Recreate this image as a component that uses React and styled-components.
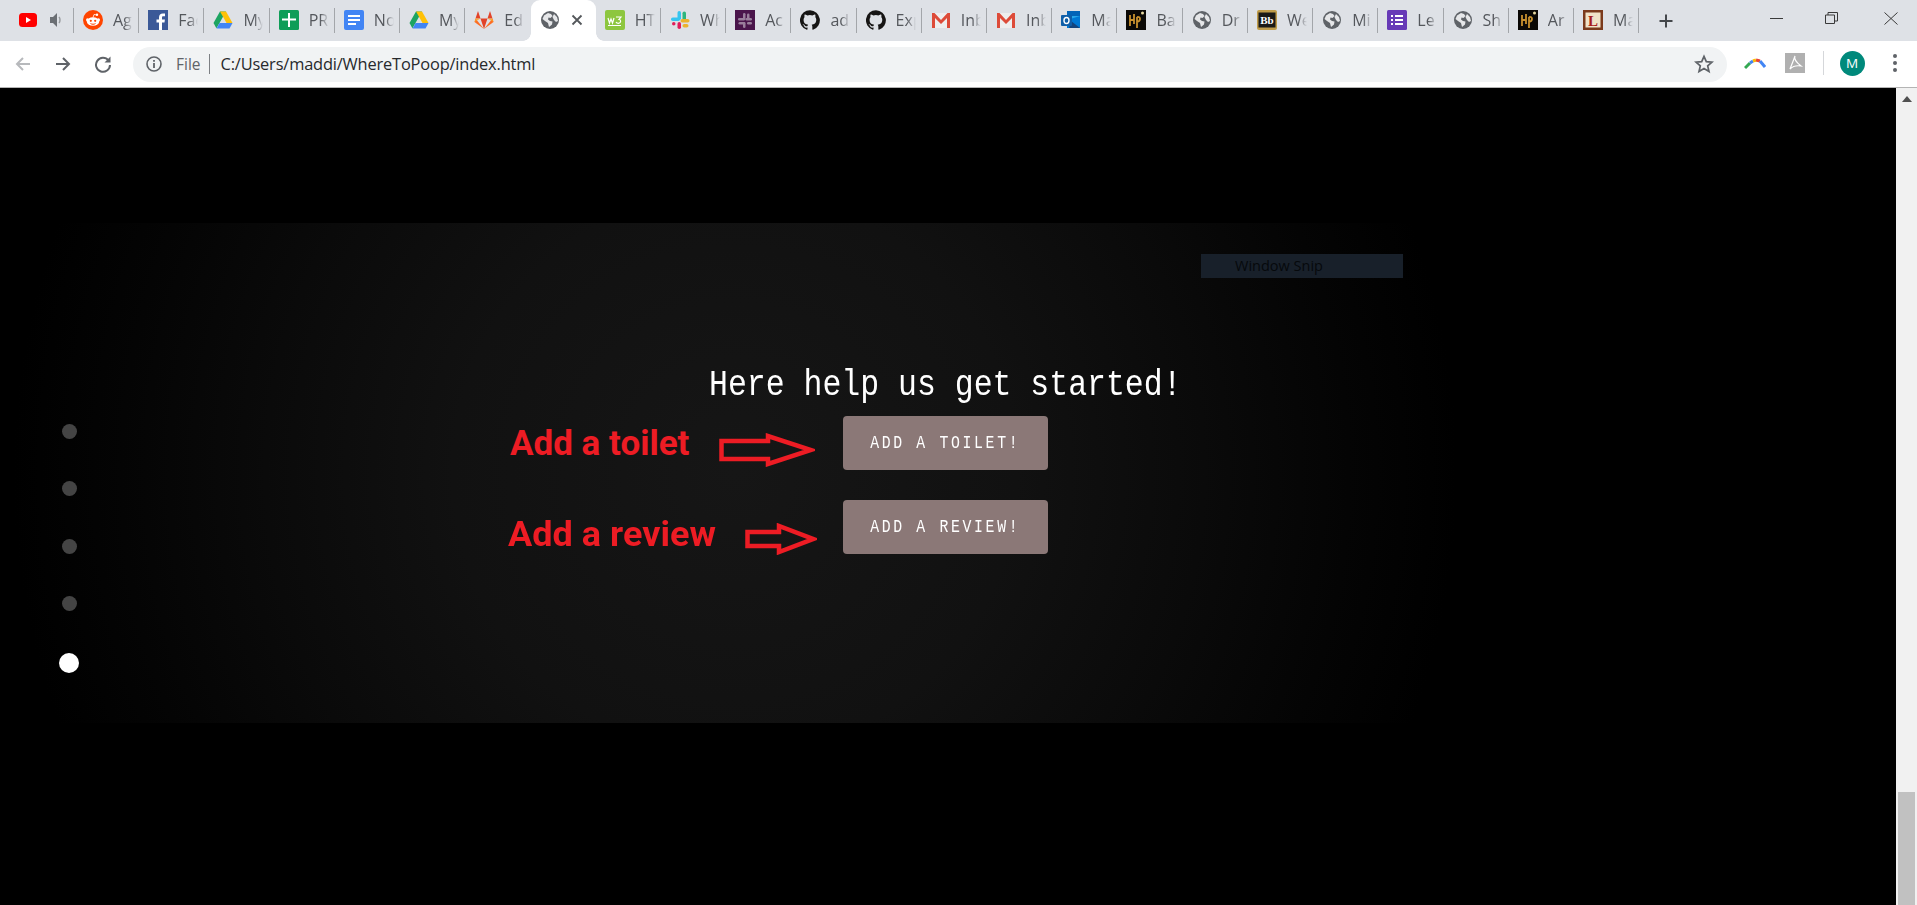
import React from "react";
import styled, { createGlobalStyle } from "styled-components";

const Global = createGlobalStyle`
  html, body { margin: 0; padding: 0; height: 100%; overflow: hidden; background: #000; }
  #root { height: 100%; }
`;

const Page = styled.div`
  width: 1917px; height: 905px; display: flex; flex-direction: column; overflow: hidden;
  font-family: "Open Sans", "Liberation Sans", sans-serif;
`;
const TabStrip = styled.div`
  height: 41px; flex: none; background: #dee1e6; display: flex; align-items: stretch; padding-left: 8.77px;
`;
const Tab = styled.div`
  position: relative; width: 65.23px; flex: none; box-sizing: border-box; display: flex; align-items: center;
  padding: 0 0 1px ${p => p.$first ? 9.5 : 9}px;
  background: ${p => p.$active ? "#fff" : "transparent"};
  border-radius: ${p => p.$active ? "9px 9px 0 0" : "0"};
  &::before {
    content: ""; position: absolute; left: -8px; right: -8px; bottom: 0; height: 8px;
    display: ${p => p.$active ? "block" : "none"};
    background:
      radial-gradient(circle at 0 0, transparent 7.5px, #fff 8px) left center / 8px 8px no-repeat,
      radial-gradient(circle at 100% 0, transparent 7.5px, #fff 8px) right center / 8px 8px no-repeat;
  }
  &::after {
    content: ""; position: absolute; right: 0; top: 8px; height: 25px; width: 1px;
    background: ${p => p.$sep ? "#a3a6aa" : "transparent"};
  }
`;
const Favicon = styled.span`
  width: 20px; height: 20px; flex: none; display: block;
  svg { display: block; width: 20px; height: 20px; }
`;
const TabLabel = styled.span`
  margin-left: 10px; width: 20px; overflow: hidden; white-space: nowrap; font-size: 16px; line-height: 20px; color: #54575c;
  -webkit-mask-image: linear-gradient(90deg, #000 55%, transparent 100%);
  mask-image: linear-gradient(90deg, #000 55%, transparent 100%);
`;
const SpeakerSlot = styled.span`
  margin-left: 12px; width: 13px; height: 16px; display: block;
  svg { display: block; }
`;
const CloseSlot = styled.span`
  margin-left: 11px; width: 12px; height: 12px; display: block;
  svg { display: block; }
`;
const NewTab = styled.div`
  width: 24px; margin-left: 15px; flex: none; display: flex; align-items: center; justify-content: center;
`;
const WindowControls = styled.div`
  margin-left: auto; margin-right: -3px; display: flex; align-items: flex-start;
`;
const WindowButton = styled.div`
  width: 57.5px; height: 30px; box-sizing: border-box; display: flex; align-items: center; justify-content: center; padding: 6px ${p => p.$nudge || 0}px 0 0;
`;
const Toolbar = styled.div`
  height: 46px; flex: none; box-sizing: content-box; background: #fff; border-bottom: 1px solid #b4b4b4; display: flex; align-items: center; padding-left: 13px; padding-bottom: 0;
`;
const NavButton = styled.div`
  width: 20px; height: 20px; margin-right: ${p => p.$gap}px; margin-top: -1px; display: flex; align-items: center; justify-content: center; flex: none;
`;
const Omnibox = styled.div`
  width: 1594px; height: 35px; margin-left: 10.5px; border-radius: 18px; background: #f1f3f4; display: flex; align-items: center; flex: none; padding-left: 13.5px; box-sizing: border-box;
`;
const FileChip = styled.span`
  font-size: 15.5px; color: #5f6368; margin-left: 14px; line-height: 20px;
`;
const OmniDivider = styled.span`
  width: 1px; height: 20px; background: #7d8084; margin-left: 8px; margin-right: 11px;
`;
const Url = styled.span`
  font-size: 16.4px; color: #27292c; letter-spacing: -0.17px; line-height: 20px;
`;
const Star = styled.span`
  margin-left: auto; margin-right: 13px; display: flex;
`;
const ToolIcons = styled.div`
  display: flex; align-items: center; flex: 1; padding: 0 0 2px 17px;
`;
const ToolDivider = styled.span`
  width: 1px; height: 24px; background: #d5d7da; margin: 0 16px 0 18px;
`;
const Avatar = styled.span`
  width: 25px; height: 25px; border-radius: 50%; background: #00897b; color: #fff; font-size: 13.5px; display: flex; align-items: center; justify-content: center; flex: none;
`;
const MenuDots = styled.span`
  display: flex; flex-direction: column; gap: 3px; margin-left: 28px;
  i { display: block; width: 4px; height: 4px; border-radius: 50%; background: #5f6368; }
`;
const Viewport = styled.div`
  flex: 1; display: flex; min-height: 0; background: #000;
`;
const Content = styled.main`
  position: relative; flex: 1; min-width: 0; padding-top: 135px;
`;
const Panel = styled.section`
  height: 500px; display: flex; flex-direction: column; align-items: flex-start; position: relative; box-sizing: border-box; padding: 139px 0 0 508px;
  background: radial-gradient(circle 722px at 735px 250px, #161616 0%, #111111 39%, #0a0a0a 65%, #040404 85%, #000 100%);
`;
const SnipLabel = styled.div`
  position: absolute; left: 1201px; top: 31px; width: 202px; height: 24px; box-sizing: border-box; padding-left: 34px; background: #18202a; color: #06090c; font-size: 14.5px; line-height: 24px;
`;
const Heading = styled.h1`
  margin: 0 0 0 201px; font-family: "Liberation Mono", monospace; font-weight: 400; font-size: 36px; line-height: 48px; color: #fff; white-space: nowrap;
  transform: scaleX(0.875); transform-origin: left center;
`;
const ActionRow = styled.div`
  display: flex; align-items: center; height: 54px; margin-top: ${p => p.$top}px;
`;
const Note = styled.span`
  width: ${p => p.$w}px; flex: none; color: #ed1c24; font-family: Roboto, sans-serif; font-weight: 700; font-size: 35px; line-height: 40px; white-space: nowrap; margin-left: ${p => p.$left}px; margin-top: ${p => p.$dy}px;
  transform: scaleX(${p => p.$sx}); transform-origin: left center;
`;
const Arrow = styled.svg`
  flex: none; display: block; margin-top: ${p => p.$dy}px;
`;
const ActionButton = styled.button`
  width: 205px; height: 54px; margin-left: ${p => p.$left}px; flex: none; border: 0; border-radius: 4px; background: #8b7877; color: #fff; padding: 0; display: flex; align-items: center; justify-content: center; overflow: hidden;
`;
const ButtonText = styled.span`
  font-family: "Liberation Mono", monospace; font-size: 19px; letter-spacing: 3.4px; white-space: nowrap; transform: scaleX(0.78);
`;
const Dots = styled.nav`
  position: absolute; left: 59px; top: 336px; width: 20px; display: flex; flex-direction: column; align-items: center; gap: 42.3px;
`;
const Dot = styled.span`
  display: block; border-radius: 50%; width: ${p => p.$on ? 20 : 15}px; height: ${p => p.$on ? 20 : 15}px; background: ${p => p.$on ? "#fff" : "#444"}; margin-left: ${p => p.$on ? 0 : 1}px;
`;
const Scrollbar = styled.div`
  width: 21px; flex: none; background: #f1f1f1; display: flex; flex-direction: column; justify-content: space-between; align-items: center;
`;
const ScrollUp = styled.div`
  height: 21px; display: flex; align-items: center; justify-content: center;
`;
const ScrollThumb = styled.div`
  width: 17px; height: 113px; background: #c1c1c1;
`;

const Globe = () => (
  <svg viewBox="0 0 20 20"><circle cx="10" cy="10" r="9" fill="#5f6368"/><path d="M4 5.5 8 3l3 1 1.5 2-2 2-2-.5-.5 2 2 1.5 2.5.5-.5 3L9 17l-1-4-3-2-2.5-2zM14 4l3 3 1 4-2 1-2-2-1.5-3z" fill="#e6e7e9"/></svg>
);
const Drive = () => (
  <svg viewBox="0 0 20 20"><path d="M7 1.5h6L6.5 13 3.4 18.3.5 13z" fill="#1da462"/><path d="M7 1.5h6l6.5 11.5h-6z" fill="#ffc107"/><path d="M6.5 13h13l-3 5.5H3.5z" fill="#4285f4"/></svg>
);
const Mail = () => (
  <svg viewBox="0 0 20 20"><rect x="1" y="3" width="18" height="15" fill="#eee"/><path d="M1 3h2.5L10 10l6.5-7H19v15h-3V8l-6 6-6-6v10H1z" fill="#dd4b39"/></svg>
);
const Git = () => (
  <svg viewBox="0 0 24 24"><path fill="#161514" d="M12 .3a12 12 0 0 0-3.8 23.4c.6.1.8-.3.8-.6v-2c-3.3.7-4-1.6-4-1.6-.6-1.4-1.400-1.800-1.400-1.800-1-.7.1-.7.1-.7 1.200.1 1.800 1.200 1.800 1.200 1 1.800 2.800 1.300 3.500 1 .1-.8.4-1.300.8-1.600-2.700-.3-5.500-1.300-5.500-5.900 0-1.300.5-2.400 1.200-3.200-.1-.3-.5-1.500.1-3.200 0 0 1-.3 3.300 1.200a11.500 11.500 0 0 1 6 0c2.300-1.500 3.300-1.200 3.300-1.200.6 1.700.2 2.900.1 3.200.8.800 1.200 1.900 1.200 3.200 0 4.600-2.800 5.600-5.500 5.900.4.400.8 1.100.8 2.200v3.300c0 .3.2.7.8.6A12 12 0 0 0 12 .3"/></svg>
);
const Potter = () => (
  <svg viewBox="0 0 20 20"><rect width="20" height="20" fill="#0b0906"/><path d="M4 5v11M8 4v10M4 10h4M11 7v11M11 7c4-1 4 4 0 5" stroke="#c8912f" strokeWidth="1.800" fill="none"/><circle cx="16.500" cy="3" r="1.500" fill="#e8d9a0"/></svg>
);
const GLYPHS = {
  youtube: <svg viewBox="0 0 20 20"><rect x="1" y="3" width="18" height="14" rx="3.500" fill="#f00"/><path d="M8 7l5 3-5 3z" fill="#fff"/></svg>,
  reddit: <svg viewBox="0 0 20 20"><circle cx="10" cy="10" r="10" fill="#ff4500"/><ellipse cx="10" cy="11.500" rx="6.200" ry="4.300" fill="#fff"/><circle cx="4.500" cy="9.800" r="1.500" fill="#fff"/><circle cx="15.500" cy="9.800" r="1.500" fill="#fff"/><circle cx="14" cy="4.800" r="1.200" fill="#fff"/><path d="M10 7.500 11 4.500 14 5" stroke="#fff" fill="none" strokeWidth=".8"/><circle cx="7.800" cy="10.800" r="1.100" fill="#ff4500"/><circle cx="12.200" cy="10.800" r="1.100" fill="#ff4500"/><path d="M7.500 13.500c1.500 1 3.500 1 5 0" stroke="#ff4500" fill="none"/></svg>,
  facebook: <svg viewBox="0 0 20 20"><rect width="20" height="20" fill="#3b5998"/><path d="M14 20v-7.500h2.500l.4-3H14V7.700c0-.9.300-1.400 1.500-1.400H17V3.600c-.3 0-1.200-.1-2.200-.1-2.300 0-3.800 1.400-3.800 3.900v2.100H8.500v3H11V20z" fill="#fff"/></svg>,
  drive: <Drive/>,
  sheets: <svg viewBox="0 0 20 20"><rect width="20" height="20" rx="1.500" fill="#0f9d58"/><path d="M9 3h2v5.500h6v2h-6V17H9v-6.500H3v-2h6z" fill="#fff"/></svg>,
  docs: <svg viewBox="0 0 20 20"><rect width="20" height="20" rx="2" fill="#4285f4"/><path d="M4 5h12v2H4zM4 9h12v2H4zM4 13h8v2H4z" fill="#fff"/></svg>,
  gitlab: <svg viewBox="0 0 20 20"><path d="M10 19 .5 12l1-3.500z" fill="#fc6d26"/><path d="M10 19l9.500-7-1-3.500z" fill="#fc6d26"/><path d="M10 19 6.500 8.500h7z" fill="#e24329"/><path d="M1.500 8.500 4 1l2.500 7.500z" fill="#e24329"/><path d="M18.500 8.500 16 1l-2.500 7.500z" fill="#e24329"/><path d="M.5 12l1-3.500h5z" fill="#fca326" opacity=".8"/><path d="M19.500 12l-1-3.500h-5z" fill="#fca326" opacity=".8"/></svg>,
  globe: <Globe/>,
  w3: <svg viewBox="0 0 20 20"><rect width="20" height="20" rx="2" fill="#8dc63f"/><path d="M3 8l1.500 5L6 9l1.500 4L9 8" stroke="#fff" fill="none" strokeWidth="1.200"/><path d="M11 7h5l-2 2.500c2 0 2.500 3.500-.5 3.800-1 0-2-.3-2.500-1.300" stroke="#fff" fill="none" strokeWidth="1.200"/><path d="M3 15.500h13" stroke="#fff"/></svg>,
  slack: <svg viewBox="0 0 20 20"><rect x="7.500" y="1" width="3.500" height="9" rx="1.750" fill="#36c5f0"/><rect x="1" y="7.500" width="9" height="3.500" rx="1.750" fill="#36c5f0" opacity="1"/><rect x="12.500" y="1.500" width="3.500" height="9" rx="1.750" fill="#2eb67d"/><rect x="10.500" y="9" width="9" height="3.500" rx="1.750" fill="#ecb22e"/><rect x="2" y="12" width="3.500" height="3.500" rx="1.750" fill="#e01e5a"/><rect x="7.500" y="12" width="3.500" height="7" rx="1.750" fill="#e01e5a"/><rect x="12.500" y="14" width="6" height="3.500" rx="1.750" fill="#ecb22e"/></svg>,
  slackDark: <svg viewBox="0 0 20 20"><rect width="20" height="20" fill="#4a154b"/><g fill="#9a7f9c"><rect x="8" y="3" width="2.500" height="7" rx="1.250"/><rect x="3" y="8" width="7" height="2.500" rx="1.250"/><rect x="12" y="3.500" width="2.500" height="6.500" rx="1.250"/><rect x="10.500" y="8" width="6.500" height="2.500" rx="1.250"/><rect x="3.500" y="12" width="6.500" height="2.500" rx="1.250"/><rect x="8" y="12" width="2.500" height="6" rx="1.250"/><rect x="12" y="12" width="5" height="2.500" rx="1.250"/></g></svg>,
  github: <Git/>,
  gmail: <Mail/>,
  outlook: <svg viewBox="0 0 20 20"><rect x="6" y="1" width="13" height="17" rx="1" fill="#28a8ea"/><path d="M6 1h13v5H6z" fill="#0364b8"/><path d="M6 10l13-4v12H6z" fill="#0078d4"/><path d="M10 11l9 7H8z" fill="#14447d"/><rect x="0" y="5" width="11" height="11" rx="1" fill="#0f5ea8"/><ellipse cx="5.500" cy="10.500" rx="2.500" ry="3" fill="none" stroke="#fff" strokeWidth="1.400"/></svg>,
  potter: <Potter/>,
  bb: <svg viewBox="0 0 20 20"><rect width="20" height="20" rx="2" fill="#c09c4a"/><rect x="1.500" y="2.500" width="17" height="15" fill="#1b1a17"/><text x="10" y="14" textAnchor="middle" fontFamily="Liberation Serif" fontWeight="700" fontSize="11" fill="#fff">Bb</text></svg>,
  forms: <svg viewBox="0 0 20 20"><rect width="20" height="20" rx="1.500" fill="#673ab7"/><path d="M8 5h8v2H8zM8 9h8v2H8zM8 13h8v2H8z" fill="#fff"/><path d="M4 5h2v2H4zM4 9h2v2H4zM4 13h2v2H4z" fill="#fff"/></svg>,
  l: <svg viewBox="0 0 20 20"><rect width="20" height="20" fill="#7b3a1c"/><rect x="2.500" y="2.500" width="15" height="15" fill="#f1e3c8"/><text x="10" y="15.500" textAnchor="middle" fontFamily="Liberation Serif" fontWeight="700" fontSize="15" fill="#a81c1c">L</text></svg>,
};

const TABS = [
  ["youtube", null], ["reddit", "Ag"], ["facebook", "Facebook"], ["drive", "My Drive"], ["sheets", "PR"], ["docs", "Notes"], ["drive", "My Drive"], ["gitlab", "Edit"],
  ["globe", null], ["w3", "HTML"], ["slack", "Wh"], ["slackDark", "Ac"], ["github", "ad"], ["github", "Exp"], ["gmail", "Inbox"], ["gmail", "Inbox"],
  ["outlook", "Ma"], ["potter", "Ba"], ["globe", "Dr"], ["bb", "We"], ["globe", "Mi"], ["forms", "Le"], ["globe", "Sh"], ["potter", "Ar"], ["l", "Ma"],
];
const ACTIVE = 8;

const BigArrow = ({ w, h, base, inset, dy }) => (
  <Arrow $dy={dy} width={w} height={h} viewBox={`0 0 ${w} ${h}`}>
    <path d={`M2.500 ${inset} H${base} V3 L${w - 4} ${h / 2} L${base} ${h - 3} V${h - inset} H2.500 Z`} fill="none" stroke="#ed1c24" strokeWidth="4.500" strokeLinejoin="miter" />
  </Arrow>
);

export default function App() {
  return (
    <>
      <Global />
      <Page>
        <TabStrip>
          {TABS.map(([icon, label], i) => (
            <Tab key={i} $first={i === 0} $active={i === ACTIVE} $sep={i !== ACTIVE && i !== ACTIVE - 1}>
              <Favicon>{GLYPHS[icon]}</Favicon>
              {label && <TabLabel>{label}</TabLabel>}
              {i === 0 && (
                <SpeakerSlot>
                  <svg width="13" height="16" viewBox="0 0 13 16"><path d="M0 5h3l4-4v14l-4-4H0z" fill="#6b6f74"/><path d="M9 5c1.300 1.500 1.300 4.500 0 6" stroke="#9a9da1" fill="none" strokeWidth="1.500"/></svg>
                </SpeakerSlot>
              )}
              {i === ACTIVE && (
                <CloseSlot>
                  <svg width="12" height="12" viewBox="0 0 12 12"><path d="M1.500 1.500l9 9M10.500 1.500l-9 9" stroke="#54575b" strokeWidth="1.800"/></svg>
                </CloseSlot>
              )}
            </Tab>
          ))}
          <NewTab>
            <svg width="16" height="16" viewBox="0 0 16 16"><path d="M8 1.500v13M1.500 8h13" stroke="#44474b" strokeWidth="2"/></svg>
          </NewTab>
          <WindowControls>
            <WindowButton><svg width="13" height="12" viewBox="0 0 13 12"><path d="M0 6.500h13" stroke="#3a3a3a"/></svg></WindowButton>
            <WindowButton $nudge={4}><svg width="13" height="12" viewBox="0 0 13 12"><path d="M.5 3h9v8.500h-9zM3 3V.5h9.500v8.500H9.500" fill="none" stroke="#3a3a3a"/></svg></WindowButton>
            <WindowButton><svg width="14" height="13" viewBox="0 0 14 13"><path d="M.5.500l13 12M13.500.500l-13 12" stroke="#3a3a3a"/></svg></WindowButton>
          </WindowControls>
        </TabStrip>
        <Toolbar>
          <NavButton $gap={20}>
            <svg width="18" height="18" viewBox="0 0 18 18"><path d="M16 9H3M9 3 3 9l6 6" fill="none" stroke="#b7b9bc" strokeWidth="2"/></svg>
          </NavButton>
          <NavButton $gap={20}>
            <svg width="18" height="18" viewBox="0 0 18 18"><path d="M2 9h13M9 3l6 6-6 6" fill="none" stroke="#5f6368" strokeWidth="2"/></svg>
          </NavButton>
          <NavButton $gap={9}>
            <svg width="18" height="18" viewBox="0 0 18 18"><path d="M14.500 5.500A7 7 0 1 0 16 10" fill="none" stroke="#5f6368" strokeWidth="2"/><path d="M16.500 1.500v6h-6z" fill="#5f6368"/></svg>
          </NavButton>
          <Omnibox>
            <svg width="16" height="16" viewBox="0 0 16 16"><circle cx="8" cy="8" r="7" fill="none" stroke="#5f6368" strokeWidth="1.600"/><path d="M8 7v5M8 4v1.700" stroke="#5f6368" strokeWidth="1.800"/></svg>
            <FileChip>File</FileChip>
            <OmniDivider />
            <Url>C:/Users/maddi/WhereToPoop/index.html</Url>
            <Star>
              <svg width="20" height="20" viewBox="0 0 20 20"><path d="M10 2.300l2.300 5.300 5.700.5-4.300 3.800 1.300 5.600-5-3-5 3 1.300-5.600L2 8.100l5.700-.5z" fill="none" stroke="#5f6368" strokeWidth="1.700"/></svg>
            </Star>
          </Omnibox>
          <ToolIcons>
            <svg width="22" height="14" viewBox="0 0 22 14"><path d="M1 12 6 7" stroke="#34a853" strokeWidth="3" fill="none"/><path d="M6 7 9 5" stroke="#4285f4" strokeWidth="3" fill="none"/><path d="M9 5 12 4" stroke="#fbbc05" strokeWidth="3" fill="none"/><path d="M12 4 16 5" stroke="#ea4335" strokeWidth="3" fill="none"/><path d="M16 5 21 11" stroke="#4285f4" strokeWidth="3" fill="none"/></svg>
            <svg style={{ marginLeft: 19 }} width="20" height="20" viewBox="0 0 20 20"><rect width="20" height="20" fill="#b0b0b0"/><path d="M10 3c-1 2 1 6 6 10-3-.5-8 0-11 3 1-3 3-7 5-13z" fill="none" stroke="#fff" strokeWidth="1.200"/></svg>
            <ToolDivider />
            <Avatar>M</Avatar>
            <MenuDots><i /><i /><i /></MenuDots>
          </ToolIcons>
        </Toolbar>
        <Viewport>
          <Content>
            <Panel>
              <SnipLabel>Window Snip</SnipLabel>
              <Heading>Here help us get started!</Heading>
              <ActionRow $top={6}>
                <Note $w={209} $left={2} $dy={1} $sx={1}>Add a toilet</Note>
                <BigArrow w={96} h={34} base={49} inset={8} dy={14} />
                <ActionButton $left={28}><ButtonText>ADD A TOILET!</ButtonText></ActionButton>
              </ActionRow>
              <ActionRow $top={30}>
                <Note $w={237} $left={0} $dy={15} $sx={1.03}>Add a review</Note>
                <BigArrow w={72} h={32} base={34} inset={9} dy={24} />
                <ActionButton $left={26}><ButtonText>ADD A REVIEW!</ButtonText></ActionButton>
              </ActionRow>
            </Panel>
            <Dots>
              <Dot /><Dot /><Dot /><Dot /><Dot $on />
            </Dots>
          </Content>
          <Scrollbar>
            <ScrollUp>
              <svg width="10" height="6" viewBox="0 0 10 6"><path d="M5 0l5 6H0z" fill="#505050"/></svg>
            </ScrollUp>
            <ScrollThumb />
          </Scrollbar>
        </Viewport>
      </Page>
    </>
  );
}
